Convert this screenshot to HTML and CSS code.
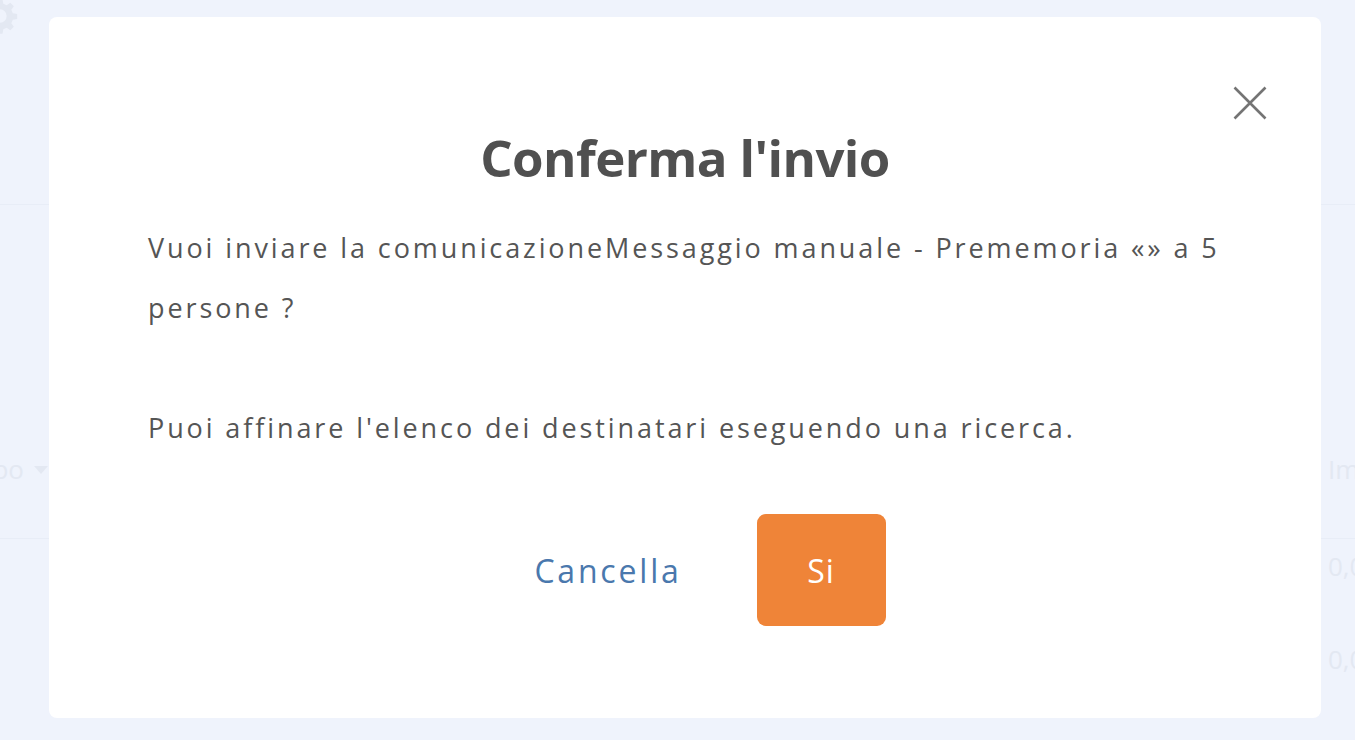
FILE: index.html
```html
<!DOCTYPE html>
<html lang="it">
<head>
    <meta charset="UTF-8">
    <meta name="viewport" content="width=device-width, initial-scale=1.0">
    <title>Conferma l'invio</title>
    <link rel="stylesheet" href="styles.css">
</head>
<body>

<!-- pagina dietro al modale -->
<div class="pagina">
    <div class="testata">
        <svg class="ingranaggio" width="40" height="40" viewBox="0 0 24 24">
            <path d="M12 8a4 4 0 1 0 0 8a4 4 0 1 0 0-8zM10.5 2h3l.5 2.6 2 .9 2.2-1.5 2.1 2.1-1.5 2.2.9 2 2.6.5v3l-2.6.5-.9 2 1.5 2.2-2.1 2.1-2.2-1.5-2 .9-.5 2.6h-3l-.5-2.6-2-.9-2.2 1.5-2.1-2.1 1.5-2.2-.9-2L2 13.5v-3l2.6-.5.9-2L4 5.8 6.1 3.7 8.3 5.2l2-.9z" fill="#e3e8f2" fill-rule="evenodd"/>
        </svg>
    </div>
    <div class="tabella">
        <div class="riga riga-intestazione">
            <div class="cella-sx">Tipo <span class="freccia"></span></div>
            <div class="cella-dx">Im</div>
        </div>
        <div class="riga">
            <div class="cella-sx"></div>
            <div class="cella-dx">0,0</div>
        </div>
        <div class="riga">
            <div class="cella-sx"></div>
            <div class="cella-dx">0,0</div>
        </div>
    </div>
</div>

<div id="sfondo-modale">
    <div id="modale">
        <span id="chiudi-modale" onclick="chiudiModale()">
            <svg width="34" height="34" viewBox="0 0 34 34">
                <path d="M1.5 1.5L32.5 32.5M32.5 1.5L1.5 32.5" stroke="#747474" stroke-width="2.6" fill="none"/>
            </svg>
        </span>

        <h2 class="titolo">Conferma l'invio</h2>

        <div class="testo">
            <p>Vuoi inviare la comunicazioneMessaggio manuale - Prememoria «» a 5 persone ?</p>
            <p class="secondo">Puoi affinare l'elenco dei destinatari eseguendo una ricerca.</p>
        </div>

        <div class="pulsanti">
            <button class="btn-cancella" onclick="chiudiModale()">Cancella</button>
            <button class="btn-si">Si</button>
        </div>
    </div>
</div>

<script>
    function chiudiModale() {
        document.getElementById("sfondo-modale").style.display = "none";
    }
</script>

</body>
</html>
```

FILE: styles.css
```css
body {
    margin: 0;
    font-family: "Open Sans", "Noto Sans", sans-serif;
    background-color: #eff3fc;
    overflow: hidden;
    height: 740px;
}
.pagina {
    color: #e3e8f2;
    font-size: 26px;
    line-height: 35px;
}
.testata {
    height: 204px;
    border-bottom: 1px solid #e8edf7;
}
.ingranaggio {
    margin: -4px 0 0 -20px;
}
.tabella {
    padding-top: 235px;
}
.riga {
    display: flex;
    justify-content: space-between;
    align-items: flex-start;
    box-sizing: border-box;
    height: 93px;
    padding-top: 10px;
}
.riga-intestazione {
    height: 99px;
    padding-top: 12px;
    border-bottom: 1px solid #e8edf7;
}
.cella-sx {
    width: 48px;
    display: flex;
    justify-content: flex-end;
    align-items: center;
    white-space: nowrap;
    gap: 10px;
}
.cella-dx {
    width: 27px;
    white-space: nowrap;
    overflow: hidden;
}
.freccia {
    border-left: 7px solid transparent;
    border-right: 7px solid transparent;
    border-top: 8px solid #e3e8f2;
}
#sfondo-modale {
    position: fixed;
    top: 0;
    left: 0;
    width: 100%;
    height: 100%;
}
#modale {
    position: relative;
    margin: 17px 0 0 49px;
    width: 1272px;
    height: 701px;
    box-sizing: border-box;
    padding: 110px 99px 0;
    background-color: #fff;
    border-radius: 8px;
    color: #555;
}
#chiudi-modale {
    position: absolute;
    top: 69px;
    right: 54px;
    cursor: pointer;
    line-height: 0;
}
.titolo {
    margin: 0;
    text-align: center;
    font-size: 51px;
    line-height: 60px;
    font-weight: 700;
    letter-spacing: -0.6px;
    color: #505050;
}
.testo {
    margin-top: 31px;
    font-size: 27px;
    line-height: 60px;
    letter-spacing: 2.9px;
}
.testo p {
    margin: 0;
}
.testo .secondo {
    margin-top: 60px;
}
.pulsanti {
    margin-top: 56px;
    padding-left: 50px;
    display: flex;
    justify-content: center;
    align-items: center;
    gap: 75px;
}
.pulsanti button {
    font-family: inherit;
    font-size: 32px;
    border: none;
    cursor: pointer;
}
.btn-cancella {
    background: none;
    color: #4a78ad;
    padding: 0;
    letter-spacing: 2.8px;
}
.btn-si {
    background-color: #ef8438;
    color: #fff;
    width: 129px;
    height: 112px;
    border-radius: 9px;
    letter-spacing: 1px;
}
```
